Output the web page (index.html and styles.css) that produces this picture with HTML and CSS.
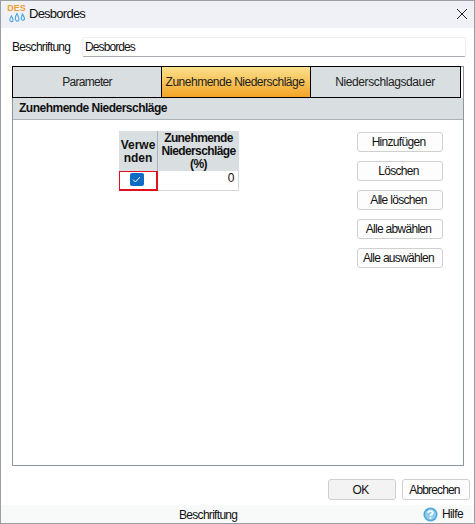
FILE: index.html
```html
<!DOCTYPE html>
<html lang="de">
<head>
  <meta charset="UTF-8" />
  <title>Desbordes</title>
  <link rel="stylesheet" href="styles.css">
</head>
<body>
  <div class="window">
    <div class="titlebar">
      <div class="logo">
        <span class="logo-text">DES</span>
        <svg width="16" height="10" viewBox="0 0 16 10">
          <path d="M2.5 3 C1 5 0.5 6 1 7.5 C2 9.3 4 8.8 4 7 C4 5.7 3 4.5 2.5 3Z M8 0.5 C6.5 3 6 5.5 6.7 7 C7.7 8.8 10 8.3 10 6.5 C10 4.5 8.8 2.5 8 0.5Z M13.5 1 C12.3 3.5 12 5 12.5 6.2 C13.3 7.8 15.5 7.3 15.5 5.7 C15.5 4.5 14.3 3 13.5 1Z" fill="none" stroke="#45a5dc" stroke-width="1.1"/>
        </svg>
      </div>
      <span class="title">Desbordes</span>
      <svg class="close" width="10" height="10" viewBox="0 0 10 10">
        <path d="M0 0 L10 10 M10 0 L0 10" stroke="#222" stroke-width="1" fill="none"/>
      </svg>
    </div>

    <div class="content">
      <div class="caption-row">
        <label class="caption-label">Beschriftung</label>
        <div class="caption-input">Desbordes</div>
      </div>

      <div class="panel">
        <div class="tabs">
          <div class="tab tab-first">Parameter</div>
          <div class="tab active">Zunehmende Niederschläge</div>
          <div class="tab">Niederschlagsdauer</div>
        </div>
        <div class="panel-head">Zunehmende Niederschläge</div>
        <div class="panel-body">
          <div class="grid">
            <div class="cell-head col-use">Verwe<br>nden</div>
            <div class="cell-head col-val">Zunehmende<br>Niederschläge<br>(%)</div>
            <div class="cell-check col-use">
              <span class="checkbox">
                <svg width="9" height="7" viewBox="0 0 9 7"><path d="M1 3.6 L3.4 6 L8 1" fill="none" stroke="#fff" stroke-width="1"/></svg>
              </span>
            </div>
            <div class="cell-num col-val">0</div>
          </div>
          <div class="side-buttons">
            <button class="btn">Hinzufügen</button>
            <button class="btn">Löschen</button>
            <button class="btn">Alle löschen</button>
            <button class="btn">Alle abwählen</button>
            <button class="btn">Alle auswählen</button>
          </div>
        </div>
      </div>

      <div class="dialog-buttons">
        <button class="btn btn-ok">OK</button>
        <button class="btn btn-cancel">Abbrechen</button>
      </div>
    </div>

    <div class="statusbar">
      <span class="status-text">Beschriftung</span>
      <span class="help">
        <svg width="15" height="15" viewBox="0 0 15 15">
          <circle cx="7.5" cy="7.5" r="7" fill="#4fa9d8"/>
          <circle cx="7.5" cy="7.5" r="5.4" fill="#8fcdea"/>
          <path d="M5.2 6 C5.2 3.4 9.8 3.4 9.8 5.8 C9.8 7.4 7.5 7.2 7.5 9" fill="none" stroke="#fff" stroke-width="1.7"/>
          <circle cx="7.5" cy="11" r="1.1" fill="#fff"/>
        </svg>
        Hilfe
      </span>
    </div>
  </div>
</body>
</html>
```

FILE: styles.css
```css
* {
  box-sizing: border-box;
  margin: 0;
  padding: 0;
}

html, body {
  width: 475px;
  height: 524px;
  overflow: hidden;
}

body {
  font-family: 'Liberation Sans', sans-serif;
  font-size: 12px;
  letter-spacing: -0.5px;
  color: #111;
  background: #fff;
}

.window {
  width: 475px;
  height: 524px;
  border: 1px solid #9a9fa3;
  display: flex;
  flex-direction: column;
  background: #fff;
}

.titlebar {
  height: 27px;
  background: #eff1f6;
  display: flex;
  align-items: center;
  padding: 0 7px 2px 7px;
  flex: none;
}

.logo {
  width: 17px;
  height: 19px;
  display: flex;
  flex-direction: column;
  align-items: center;
  margin-right: 4px;
}

.logo-text {
  font-size: 9px;
  font-weight: bold;
  line-height: 9px;
  letter-spacing: 0;
  color: #f0a030;
}

.title {
  font-size: 13px;
  letter-spacing: -0.75px;
  flex: 1;
}

.content {
  flex: 1;
  display: flex;
  flex-direction: column;
  padding: 9px 0 0 11px;
}

.caption-row {
  display: flex;
  align-items: center;
  height: 20px;
}

.caption-label {
  width: 70px;
  letter-spacing: -0.7px;
}

.caption-input {
  width: 384px;
  height: 20px;
  line-height: 19px;
  padding-left: 2px;
  border: 1px solid #eceef0;
  border-bottom-color: #a8acb0;
  border-radius: 2px;
  letter-spacing: -0.9px;
}

.panel {
  width: 452px;
  height: 400px;
  margin-top: 9px;
  border: 1px solid #8d979c;
  display: flex;
  flex-direction: column;
}

.tabs {
  display: flex;
  height: 32px;
  margin: -1px 0 0 -1px;
  flex: none;
}

.tab {
  width: 150px;
  border: 1px solid #000;
  background: #d9dee1;
  display: flex;
  align-items: center;
  justify-content: center;
  margin-right: -1px;
  color: #222;
}

.tab-first {
  letter-spacing: -0.7px;
}

.tab:last-child {
  width: 151px;
  letter-spacing: -0.4px;
  padding-right: 1px;
}

.tab.active {
  background: linear-gradient(#fbe08c, #f4a526);
  padding-right: 2px;
}

.panel-head {
  height: 22px;
  flex: none;
  background: #d9dee1;
  border-bottom: 1px solid #a9b2b6;
  font-weight: bold;
  line-height: 21px;
  padding-left: 6px;
}

.panel-body {
  flex: 1;
  display: flex;
  justify-content: space-between;
  padding: 11px 20px 0 106px;
}

.grid {
  width: 120px;
  height: 60px;
  display: grid;
  grid-template-columns: 39px 81px;
  grid-template-rows: 40px 20px;
  border-right: 1px solid #d4d8da;
  border-bottom: 1px solid #d4d8da;
}

.cell-head {
  background: #d9dee1;
  font-weight: bold;
  text-align: center;
  line-height: 13px;
  padding-top: 1px;
  display: flex;
  align-items: center;
  justify-content: center;
  letter-spacing: -0.6px;
}

.cell-head.col-use {
  border-right: 1px solid #a9b2b6;
  letter-spacing: 0;
}

.cell-check {
  border: 1px solid #e0101c;
  border-width: 1px 2px 2px 1px;
  padding: 0 3px 2px 0;
  display: flex;
  align-items: center;
  justify-content: center;
}

.checkbox {
  width: 14px;
  height: 13px;
  border-radius: 2px;
  background: #0f6cc4;
  display: flex;
  align-items: center;
  justify-content: center;
}

.cell-num {
  text-align: right;
  line-height: 15px;
  padding-right: 5px;
}

.side-buttons {
  display: flex;
  flex-direction: column;
  gap: 9px;
  padding-top: 1px;
}

.btn {
  font-family: inherit;
  font-size: 12px;
  letter-spacing: -0.7px;
  color: #111;
  width: 86px;
  height: 20px;
  padding: 0 3px 0 0;
  background: #fdfdfd;
  border: 1px solid #d0d0d0;
  border-radius: 3px;
}

.dialog-buttons {
  display: flex;
  justify-content: flex-end;
  gap: 6px;
  padding: 13px 4px 0 0;
}

.btn-ok {
  width: 68px;
  height: 21px;
  background: #f3f3f3;
}

.btn-cancel {
  width: 68px;
  height: 21px;
  letter-spacing: -0.85px;
}

.statusbar {
  height: 18px;
  flex: none;
  background: #f8f9f9;
  display: flex;
  align-items: center;
  justify-content: flex-end;
  position: relative;
  padding-right: 11px;
}

.status-text {
  position: absolute;
  left: 178px;
  top: 3px;
  letter-spacing: -0.7px;
}

.help {
  display: flex;
  align-items: center;
  gap: 4px;
  letter-spacing: -0.6px;
}
```
